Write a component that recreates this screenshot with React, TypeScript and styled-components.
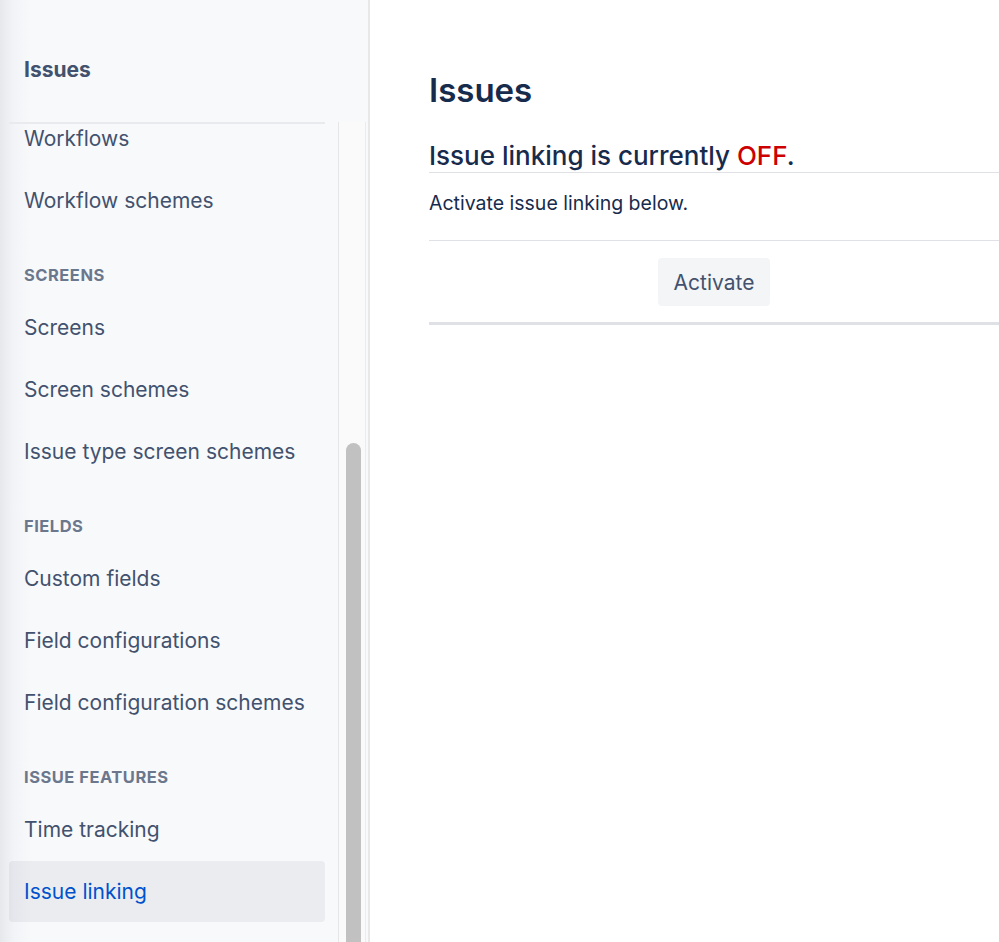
import { useLayoutEffect, useRef } from "react";
import styled, { createGlobalStyle } from "styled-components";

interface NavEntry {
    kind: "item" | "heading";
    label: string;
    selected?: boolean;
}

const navEntries: NavEntry[] = [
    { kind: "item", label: "Workflows" },
    { kind: "item", label: "Workflow schemes" },
    { kind: "heading", label: "Screens" },
    { kind: "item", label: "Screens" },
    { kind: "item", label: "Screen schemes" },
    { kind: "item", label: "Issue type screen schemes" },
    { kind: "heading", label: "Fields" },
    { kind: "item", label: "Custom fields" },
    { kind: "item", label: "Field configurations" },
    { kind: "item", label: "Field configuration schemes" },
    { kind: "heading", label: "Issue features" },
    { kind: "item", label: "Time tracking" },
    { kind: "item", label: "Issue linking", selected: true },
];

function Sidebar() {
    const listRef = useRef<HTMLDivElement>(null);

    // the list in the picture is scrolled a little past the top
    useLayoutEffect(() => {
        if (listRef.current) listRef.current.scrollTop = 16;
    }, []);

    return (
        <SidebarWrapper>
            <SidebarHeader>Issues</SidebarHeader>
            <ScrollArea>
                <ListColumn>
                    <Divider />
                    <ListViewport ref={listRef}>
                        {navEntries.map((entry, i) =>
                            entry.kind === "heading" ? (
                                <SectionHeading key={i}>{entry.label}</SectionHeading>
                            ) : (
                                <NavItem key={i} $selected={entry.selected}>
                                    {entry.label}
                                </NavItem>
                            )
                        )}
                        <ListTail />
                    </ListViewport>
                </ListColumn>
                <ScrollTrack>
                    <ScrollThumb />
                </ScrollTrack>
            </ScrollArea>
        </SidebarWrapper>
    );
}

function App() {
    return (
        <>
            <GlobalStyle />
            <Page>
                <Sidebar />
                <Main>
                    <Title>Issues</Title>
                    <StatusHeading>
                        Issue linking is currently <OffText>OFF</OffText>.
                    </StatusHeading>
                    <Description>Activate issue linking below.</Description>
                    <ButtonRow>
                        <ActivateButton>Activate</ActivateButton>
                    </ButtonRow>
                </Main>
            </Page>
        </>
    );
}

const GlobalStyle = createGlobalStyle`
    * {
        box-sizing: border-box;
    }
    body {
        margin: 0;
        overflow: hidden;
        background: #ffffff;
        font-family: Inter, "Noto Sans", "Liberation Sans", sans-serif;
    }
`;

const Page = styled.div`
    display: flex;
    height: 100vh;
`;

const SidebarWrapper = styled.aside`
    display: flex;
    flex-direction: column;
    width: 370px;
    flex-shrink: 0;
    height: 100%;
    border-right: 2px solid #e8e8e8;
    background: linear-gradient(to right, #e7e8eb 0px, #f3f4f7 14px, #f8f9fb 32px);
`;

const SidebarHeader = styled.div`
    height: 122px;
    padding: 57px 0 0 24px;
    font-size: 21px;
    line-height: 26px;
    font-weight: 700;
    color: #42526e;
`;

const ScrollArea = styled.div`
    display: flex;
    flex: 1;
    min-height: 0;
`;

const ListColumn = styled.div`
    display: flex;
    flex-direction: column;
    flex: 1;
    min-width: 0;
    padding: 0 13px 0 9px;
`;

const Divider = styled.div`
    height: 2px;
    flex-shrink: 0;
    background: #e9eaee;
`;

const ListViewport = styled.div`
    flex: 1;
    overflow: hidden;
`;

const NavItem = styled.div<{ $selected?: boolean }>`
    display: flex;
    align-items: center;
    height: 61px;
    margin-bottom: 1px;
    padding-left: 15px;
    border-radius: 4px;
    font-size: 21px;
    color: ${(p) => (p.$selected ? "#0052cc" : "#42526e")};
    background: ${(p) => (p.$selected ? "rgba(9, 30, 66, 0.06)" : "transparent")};
    white-space: nowrap;
`;

const ListTail = styled.div`
    height: 40px;
`;

const SectionHeading = styled.div`
    height: 65px;
    padding: 33px 0 0 15px;
    font-size: 16.5px;
    line-height: 20px;
    font-weight: 700;
    letter-spacing: 0.5px;
    text-transform: uppercase;
    color: #6b778c;
`;

const ScrollTrack = styled.div`
    display: flex;
    flex-direction: column;
    width: 28px;
    flex-shrink: 0;
    margin-right: 2px;
    padding-left: 7px;
    background: #fafafa;
    border-left: 1px solid #e6e6e6;
    border-right: 1px solid #ececec;
`;

const ScrollThumb = styled.div`
    width: 15px;
    flex: 1;
    margin-top: 321px;
    border-radius: 8px 8px 0 0;
    background: #c1c1c1;
`;

const Main = styled.main`
    flex: 1;
    min-width: 0;
    padding: 70px 0 0 59px;
    color: #172b4d;
`;

const Title = styled.h1`
    margin: 0;
    font-size: 33px;
    line-height: 40px;
    font-weight: 600;
`;

const StatusHeading = styled.h2`
    margin: 30px 0 0;
    font-size: 26px;
    line-height: 32px;
    font-weight: 500;
    border-bottom: 1px solid #dfe1e6;
`;

const OffText = styled.span`
    color: #cc0000;
`;

const Description = styled.p`
    margin: 0;
    padding: 18px 0 25px;
    font-size: 19.5px;
    line-height: 24px;
    border-bottom: 1px solid #dfe1e6;
`;

const ButtonRow = styled.div`
    display: flex;
    justify-content: center;
    padding: 17px 0 16px;
    border-bottom: 3px solid #dfe1e6;
`;

const ActivateButton = styled.button`
    height: 48px;
    padding: 0 16px;
    border: none;
    border-radius: 4px;
    background: #f4f5f7;
    color: #42526e;
    font-family: inherit;
    font-size: 21px;
    cursor: pointer;
`;

export default App;
